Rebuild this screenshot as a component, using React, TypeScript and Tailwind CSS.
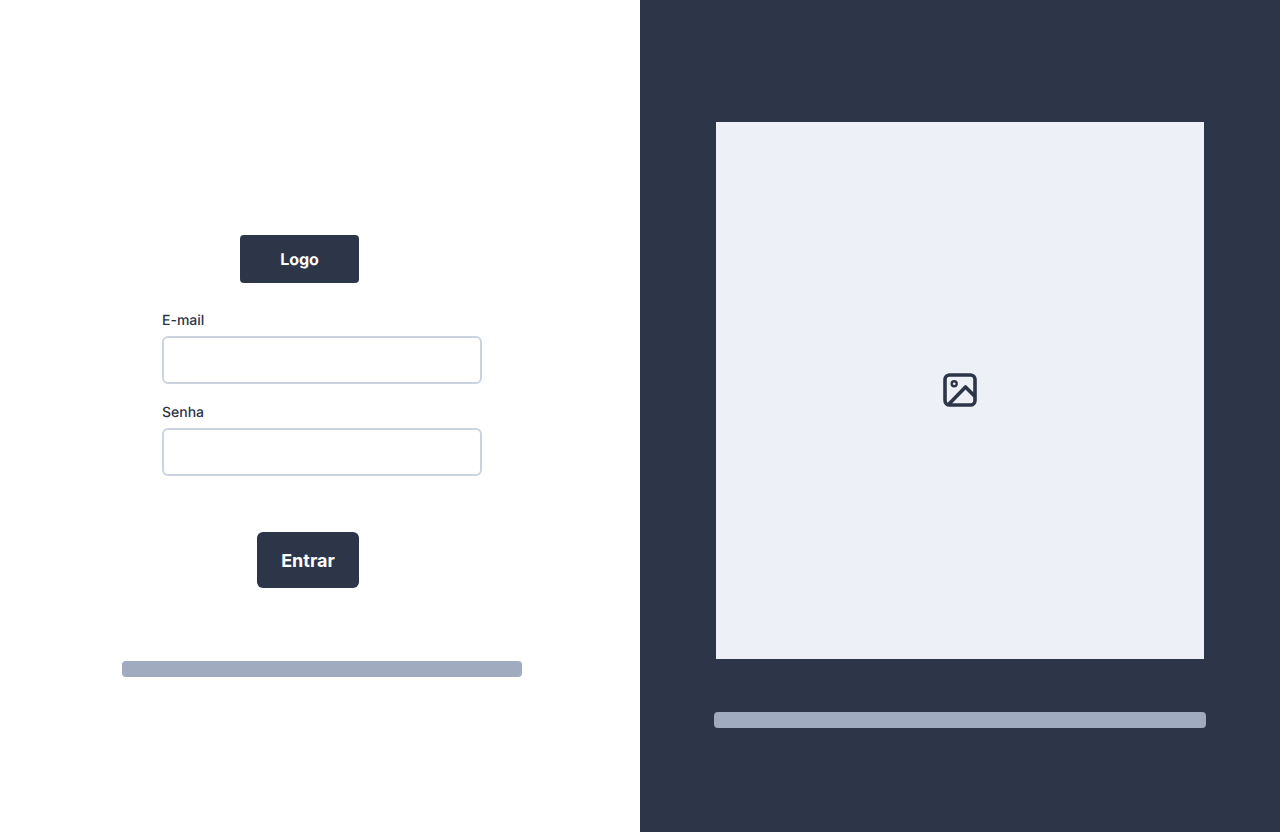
const Field = ({ label }: { label: string }) => (
  <div className="flex flex-col">
    <label className="h-6 text-sm leading-[18px] font-[550] text-[#2d3648]">{label}</label>
    <input className="w-80 h-12 rounded-md border-2 border-[#cbd2e0] bg-white" />
  </div>
);

export default function App() {
  return (
    <div className="flex h-[832px] w-full overflow-hidden font-['Inter',sans-serif] antialiased [text-rendering:geometricPrecision]">
      <div className="w-1/2 bg-white flex flex-col items-center pl-1 pt-[235px]">
        <div className="w-[119px] h-12 mr-[45px] rounded bg-[#2d3648] flex items-center justify-center text-white font-[650] tracking-[-0.1px]">
          Logo
        </div>
        <div className="flex flex-col gap-[20px] mt-[29px]">
          <Field label="E-mail" />
          <Field label="Senha" />
        </div>
        <button className="w-[102px] h-14 mt-14 ml-[-28px] pt-px rounded-md bg-[#2d3648] text-white text-lg font-[650]">
          Entrar
        </button>
        <div className="w-[400px] h-4 mt-[73px] rounded-sm bg-[#a0abc0]" />
      </div>
      <div className="w-1/2 bg-[#2d3648] flex flex-col items-center pt-[122px]">
        <div className="w-[488px] h-[537px] bg-[#edf0f7] flex items-center justify-center">
          <svg width="40" height="40" viewBox="0 0 40 40" fill="none" className="mb-px text-[#2d3648]">
            <rect x="5" y="5" width="30" height="30" rx="4.5" stroke="currentColor" strokeWidth="3.6" />
            <circle cx="14.2" cy="13.8" r="2.5" stroke="currentColor" strokeWidth="2.4" />
            <path d="M9 34L25.5 17L35 26.5" stroke="currentColor" strokeWidth="3.6" strokeLinejoin="round" />
          </svg>
        </div>
        <div className="w-[492px] h-4 mt-[53px] rounded-sm bg-[#a0abc0]" />
      </div>
    </div>
  );
}
